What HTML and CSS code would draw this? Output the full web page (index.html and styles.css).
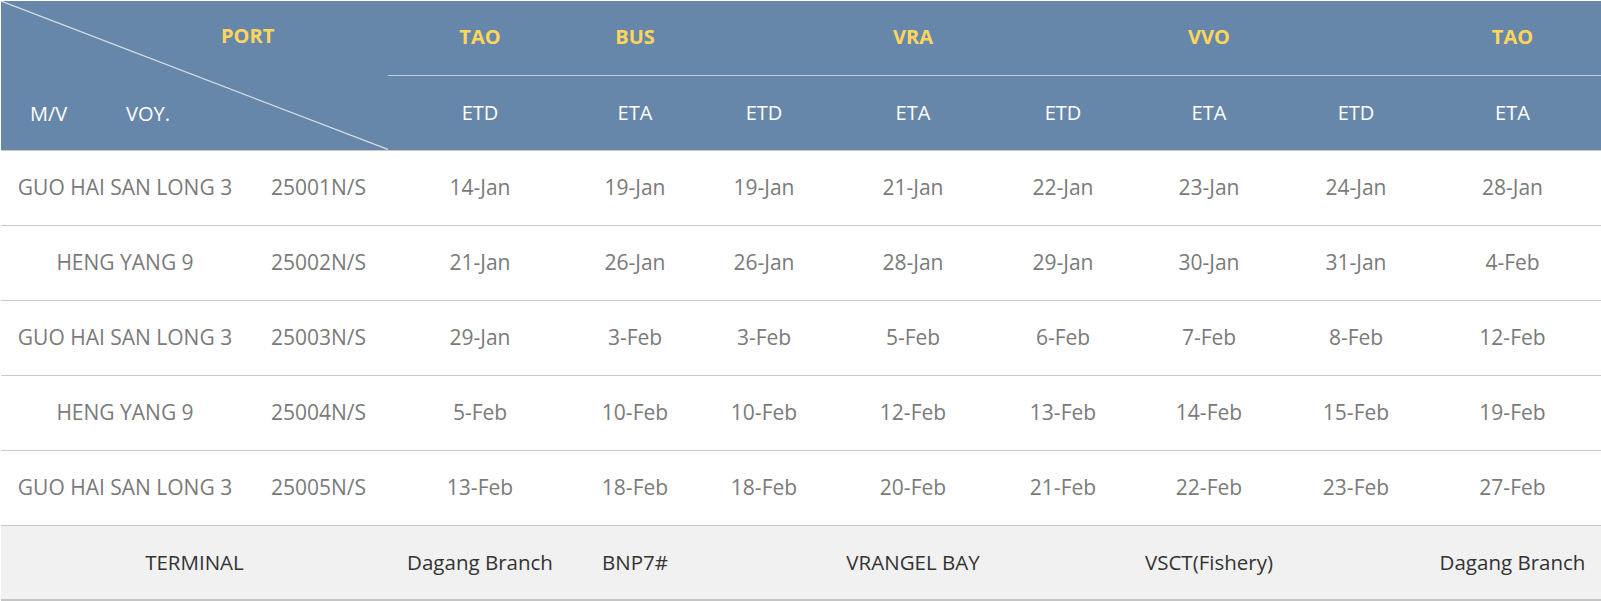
FILE: index.html
```html
<!DOCTYPE html>
<html>
<head>
<meta charset="utf-8">
<link rel="stylesheet" href="styles.css">
</head>
<body>
<table class="schedule">
  <colgroup>
    <col class="c-mv"><col class="c-voy">
    <col class="c1"><col class="c2"><col class="c3"><col class="c4">
    <col class="c5"><col class="c6"><col class="c7"><col class="c8">
  </colgroup>
  <thead>
    <tr class="ports">
      <th class="diag" colspan="2" rowspan="2">
        <svg class="diag-line" viewBox="0 0 387 149" preserveAspectRatio="none"><line x1="0" y1="0" x2="387" y2="149" stroke="#d9dee6" stroke-width="1.2"/></svg>
        <span class="port-label">PORT</span>
        <span class="mv-label">M/V</span>
        <span class="voy-label">VOY.</span>
      </th>
      <th>TAO</th><th>BUS</th><th></th><th>VRA</th><th></th><th>VVO</th><th></th><th>TAO</th>
    </tr>
    <tr class="kinds">
      <th>ETD</th><th>ETA</th><th>ETD</th><th>ETA</th><th>ETD</th><th>ETA</th><th>ETD</th><th>ETA</th>
    </tr>
  </thead>
  <tbody>
    <tr><td>GUO HAI SAN LONG 3</td><td>25001N/S</td><td>14-Jan</td><td>19-Jan</td><td>19-Jan</td><td>21-Jan</td><td>22-Jan</td><td>23-Jan</td><td>24-Jan</td><td>28-Jan</td></tr>
    <tr><td>HENG YANG 9</td><td>25002N/S</td><td>21-Jan</td><td>26-Jan</td><td>26-Jan</td><td>28-Jan</td><td>29-Jan</td><td>30-Jan</td><td>31-Jan</td><td>4-Feb</td></tr>
    <tr><td>GUO HAI SAN LONG 3</td><td>25003N/S</td><td>29-Jan</td><td>3-Feb</td><td>3-Feb</td><td>5-Feb</td><td>6-Feb</td><td>7-Feb</td><td>8-Feb</td><td>12-Feb</td></tr>
    <tr><td>HENG YANG 9</td><td>25004N/S</td><td>5-Feb</td><td>10-Feb</td><td>10-Feb</td><td>12-Feb</td><td>13-Feb</td><td>14-Feb</td><td>15-Feb</td><td>19-Feb</td></tr>
    <tr><td>GUO HAI SAN LONG 3</td><td>25005N/S</td><td>13-Feb</td><td>18-Feb</td><td>18-Feb</td><td>20-Feb</td><td>21-Feb</td><td>22-Feb</td><td>23-Feb</td><td>27-Feb</td></tr>
    <tr class="terminal"><td colspan="2">TERMINAL</td><td>Dagang Branch</td><td>BNP7#</td><td></td><td>VRANGEL BAY</td><td></td><td>VSCT(Fishery)</td><td></td><td>Dagang Branch</td></tr>
  </tbody>
</table>
</body>
</html>
```
FILE: styles.css
```css
html, body {
  margin: 0;
  padding: 0;
  background: #ffffff;
}
body {
  padding: 1px 0 0 1px;
  font-family: "Open Sans", "Noto Sans", sans-serif;
}
.schedule {
  border-collapse: collapse;
  table-layout: fixed;
  width: 1600px;
}
.c-mv { width: 248px; }
.c-voy { width: 139px; }
.c1 { width: 184px; }
.c2 { width: 126px; }
.c3 { width: 132px; }
.c4 { width: 166px; }
.c5 { width: 134px; }
.c6 { width: 158px; }
.c7 { width: 136px; }
.c8 { width: 177px; }

.schedule th, .schedule td {
  padding: 0;
  text-align: center;
  font-weight: normal;
  white-space: nowrap;
  line-height: 1.3;
}
.schedule thead {
  background: #6787aa;
}
.ports th {
  height: 74px;
  color: #ffd65c;
  font-weight: bold;
  font-size: 20px;
  border-bottom: 1px solid #c3cedb;
  vertical-align: top;
  padding-top: 23px;
  box-sizing: border-box;
}
.kinds th {
  height: 74px;
  color: #ffffff;
  font-size: 20px;
}
.schedule thead tr.kinds th {
  border-bottom: 1px solid #c9c9c9;
}
.ports th.diag {
  position: relative;
  border-bottom: 1px solid #c9c9c9;
  padding-top: 0;
}
.diag-line {
  position: absolute;
  left: 0;
  top: 0;
  width: 100%;
  height: 100%;
}
.port-label {
  position: absolute;
  left: 220px;
  top: 22px;
  color: #ffd65c;
  font-size: 20px;
  font-weight: bold;
}
.mv-label, .voy-label {
  position: absolute;
  top: 100px;
  color: #ffffff;
  font-weight: normal;
  font-size: 20px;
}
.mv-label { left: 29px; }
.voy-label { left: 125px; }

.schedule tbody td {
  height: 74px;
  color: #7a7a7a;
  font-size: 21px;
  border-bottom: 1px solid #c9c9c9;
}
.schedule tbody tr.terminal td {
  background: #f1f1f1;
  color: #333333;
  font-size: 20.5px;
  border-bottom: 2px solid #c4c4c4;
  height: 73px;
}
```
